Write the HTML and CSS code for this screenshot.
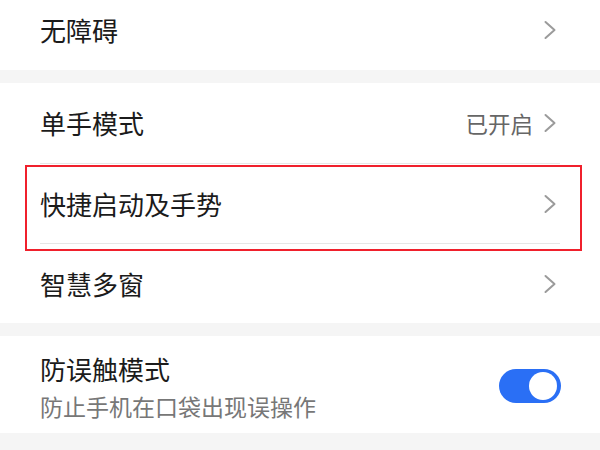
FILE: index.html
```html
<!DOCTYPE html>
<html lang="zh-CN">
<head>
<meta charset="utf-8">
<title>设置</title>
<link rel="stylesheet" href="styles.css">
</head>
<body>
<div class="page">
  <section class="group group-first">
    <div class="row">
      <span class="label">无障碍</span>
      <span class="trail">
        <svg class="chev" viewBox="0 0 12 20" width="12" height="20"><path d="M1.5 2 L10.5 10 L1.5 18" fill="none" stroke="#9b9b9b" stroke-width="2" stroke-linecap="round" stroke-linejoin="round"/></svg>
      </span>
    </div>
  </section>
  <section class="group">
    <div class="row">
      <span class="label">单手模式</span>
      <span class="trail">
        <span class="value">已开启</span>
        <svg class="chev" viewBox="0 0 12 20" width="12" height="20"><path d="M1.5 2 L10.5 10 L1.5 18" fill="none" stroke="#9b9b9b" stroke-width="2" stroke-linecap="round" stroke-linejoin="round"/></svg>
      </span>
    </div>
    <div class="row">
      <span class="label">快捷启动及手势</span>
      <span class="trail">
        <svg class="chev" viewBox="0 0 12 20" width="12" height="20"><path d="M1.5 2 L10.5 10 L1.5 18" fill="none" stroke="#9b9b9b" stroke-width="2" stroke-linecap="round" stroke-linejoin="round"/></svg>
      </span>
    </div>
    <div class="row">
      <span class="label">智慧多窗</span>
      <span class="trail">
        <svg class="chev" viewBox="0 0 12 20" width="12" height="20"><path d="M1.5 2 L10.5 10 L1.5 18" fill="none" stroke="#9b9b9b" stroke-width="2" stroke-linecap="round" stroke-linejoin="round"/></svg>
      </span>
    </div>
  </section>
  <section class="group group-last">
    <div class="row row-tall">
      <div class="texts">
        <span class="label">防误触模式</span>
        <span class="sub">防止手机在口袋出现误操作</span>
      </div>
      <span class="switch"><span class="knob"></span></span>
    </div>
  </section>
  <div class="highlight"></div>
</div>
</body>
</html>
```
FILE: styles.css
```css
html, body {
  margin: 0;
  padding: 0;
  background: #f5f5f5;
  font-family: "Noto Sans CJK SC", "Noto Sans", sans-serif;
}

.page {
  position: relative;
  width: 600px;
  height: 450px;
  overflow: hidden;
}

.group {
  background: #ffffff;
  margin-bottom: 13px;
}

.group-first {
  margin-top: -10px;
}

.group + .group-last {
  margin-top: 1px;
}

.row {
  box-sizing: border-box;
  height: 80px;
  margin: 0 40px;
  display: flex;
  align-items: center;
  justify-content: space-between;
}

.row + .row {
  border-top: 1px solid #e6e6e6;
}

.label {
  font-size: 26px;
  line-height: 34px;
  color: #1b1b1b;
}

.trail {
  display: flex;
  align-items: center;
  gap: 11px;
  margin-right: 4px;
}

.value {
  font-size: 22.5px;
  line-height: 30px;
  color: #666666;
}

.chev {
  display: block;
}

.row-tall {
  height: 97px;
  padding: 16px 0 12px;
}

.texts {
  display: flex;
  flex-direction: column;
  gap: 5px;
}

.sub {
  font-size: 23px;
  line-height: 30px;
  color: #777777;
}

.switch {
  position: relative;
  width: 62px;
  height: 34px;
  border-radius: 17px;
  background: #2a6ff5;
  margin-right: -1px;
  margin-top: -2px;
}

.knob {
  position: absolute;
  top: 3px;
  right: 4px;
  width: 28px;
  height: 28px;
  border-radius: 50%;
  background: #ffffff;
}

.highlight {
  position: absolute;
  left: 25px;
  top: 165px;
  width: 557px;
  height: 86px;
  box-sizing: border-box;
  border: 2px solid #f0202c;
}
```
